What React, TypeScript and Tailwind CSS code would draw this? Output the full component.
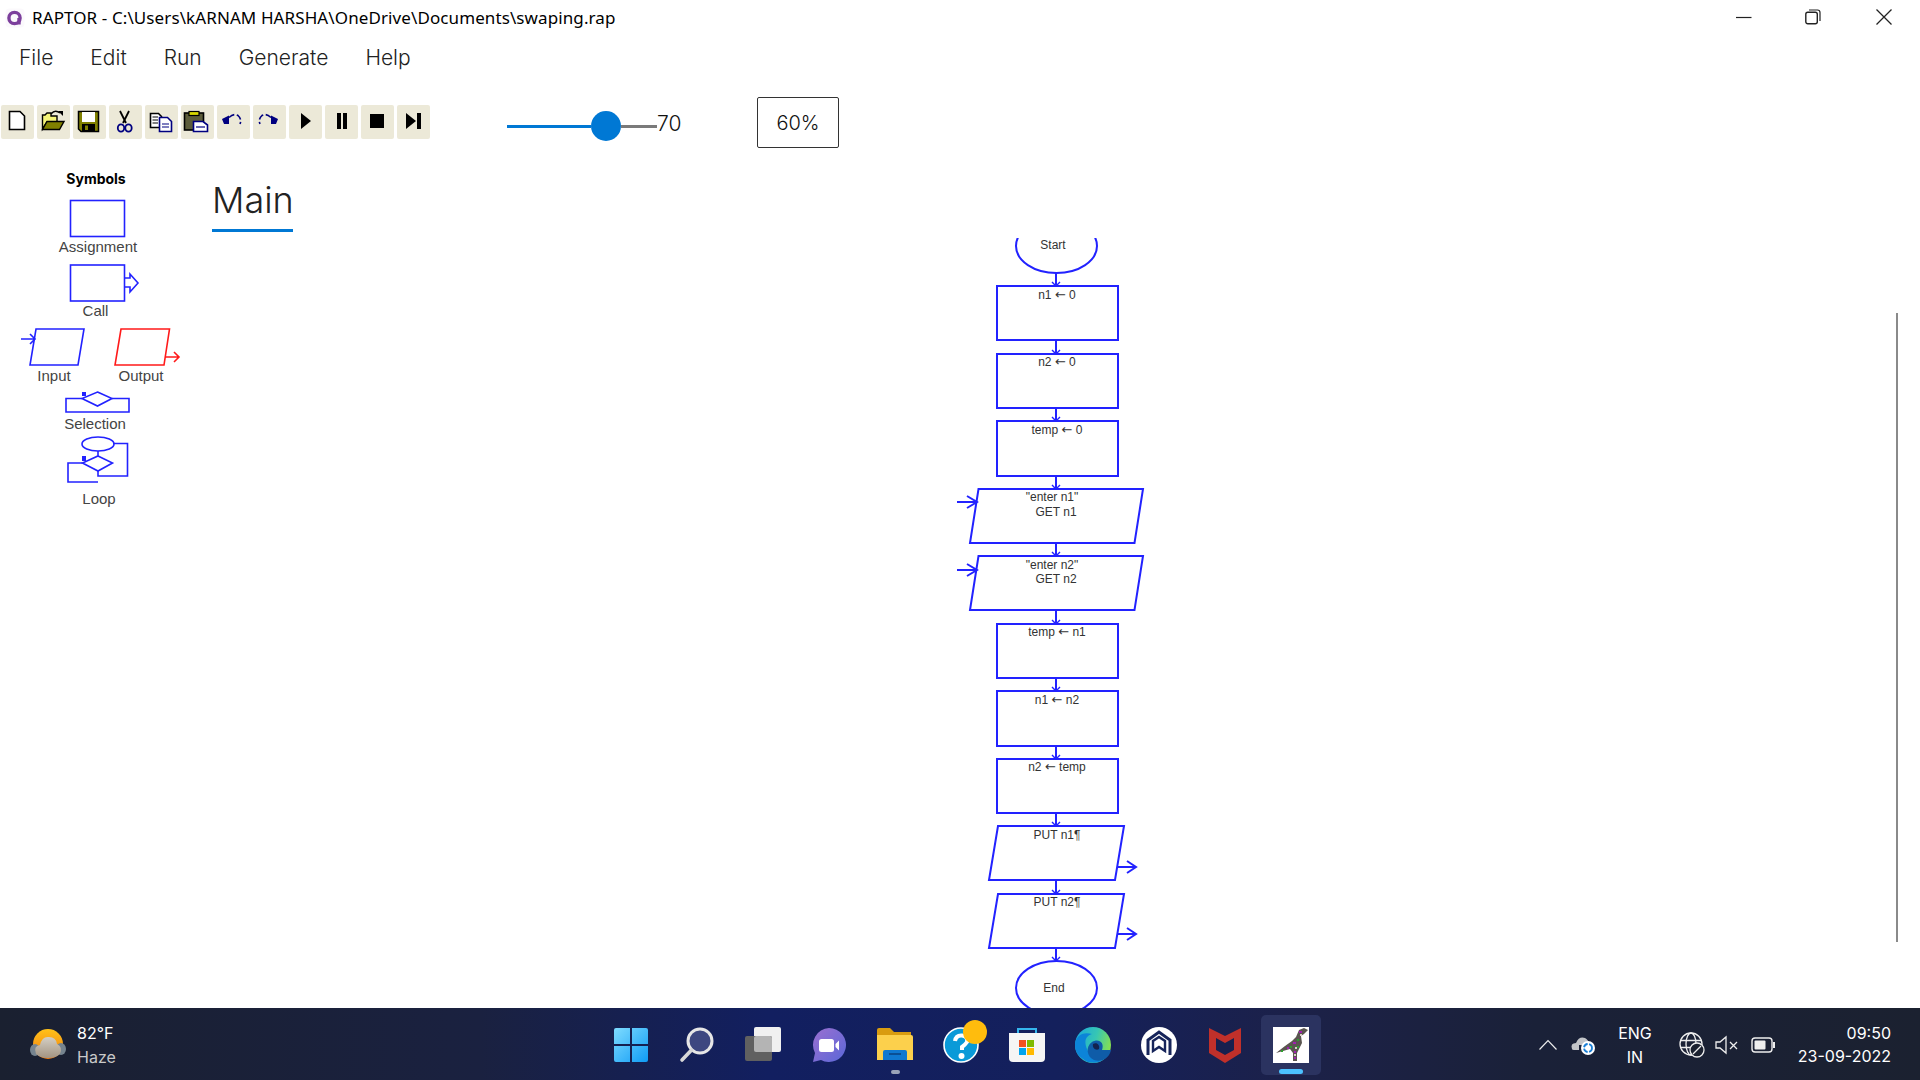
import React, { FC, ReactNode } from 'react';

const BLUE = '#2222ff';
const SEGOE = "font-['Noto_Sans',sans-serif]";
const INTER = "font-['Inter',sans-serif]";

const menuItems = ['File', 'Edit', 'Run', 'Generate', 'Help'];

const toolIcons: ReactNode[] = [
  <path key="new" d="M8.5 6.5H19L23.5 11V24.5H8.5Z" fill="#fff" stroke="#000" strokeWidth="1.6" />,
  <g key="open">
    <path d="M5.5 24V10H8L10 8H14V11H20V17H10L5.5 24Z" fill="#f4f47a" stroke="#000" strokeWidth="1.4" />
    <path d="M5.5 24.5L10 16.5H27L22.5 24.5Z" fill="#808000" stroke="#000" strokeWidth="1.4" />
    <path d="M14 9Q18 4 23 8" fill="none" stroke="#000" strokeWidth="1.4" />
    <path d="M21 6H26V11Z" fill="#000" />
  </g>,
  <g key="save">
    <path d="M5.5 6.5H25.5V26.5H8L5.5 24Z" fill="#808000" stroke="#000" strokeWidth="1.5" />
    <rect x="9" y="7" width="13" height="10" fill="#fff" />
    <rect x="9" y="19" width="13" height="7" fill="#000" />
    <rect x="12" y="20.5" width="3" height="4.5" fill="#808000" />
  </g>,
  <g key="cut">
    <path d="M11 6L17 18M20 6L14 18" stroke="#000" strokeWidth="1.8" fill="none" />
    <ellipse cx="12" cy="23" rx="3.2" ry="3.6" fill="none" stroke="#000080" strokeWidth="1.8" />
    <ellipse cx="19.5" cy="23" rx="3.2" ry="3.6" fill="none" stroke="#000080" strokeWidth="1.8" />
  </g>,
  <g key="copy">
    <path d="M5.5 8.5H13.5L16.5 11.5V22.5H5.5Z" fill="#fff" stroke="#000" strokeWidth="1.6" />
    <path d="M7.5 12H13M7.5 15H13M7.5 18H13" stroke="#000" strokeWidth="1.2" />
    <path d="M14.5 12.5H22.5L26.5 16.5V26.5H14.5Z" fill="#fff" stroke="#000080" strokeWidth="1.6" />
    <path d="M17 19H24M17 22H24" stroke="#000080" strokeWidth="1.2" />
  </g>,
  <g key="paste">
    <rect x="3.5" y="8" width="19" height="17" fill="#5c5c3a" stroke="#000" strokeWidth="1.6" />
    <rect x="8" y="6.5" width="10" height="4" fill="#d8d800" stroke="#000" strokeWidth="1.2" />
    <path d="M12.5 16.5H22L26.5 20V26.5H12.5Z" fill="#fff" stroke="#000080" strokeWidth="1.6" />
    <path d="M15 22H24" stroke="#000080" strokeWidth="1.2" />
  </g>,
  <g key="undo">
    <path d="M5 14L12 10.5V19H7Z" fill="#000080" />
    <path d="M12 12.5Q17 8 21 10.5Q25 14 23 19" fill="none" stroke="#000080" strokeWidth="1.6" strokeDasharray="6 2.5" />
  </g>,
  <g key="redo">
    <path d="M25 14L18 10.5V19H23Z" fill="#000080" />
    <path d="M18 12.5Q13 8 9 10.5Q5 14 7 19" fill="none" stroke="#000080" strokeWidth="1.6" strokeDasharray="6 2.5" />
  </g>,
  <path key="run" d="M12 8L22 16L12 24Z" fill="#000" />,
  <g key="pause">
    <rect x="12" y="8" width="4" height="16" fill="#000" />
    <rect x="18" y="8" width="4" height="16" fill="#000" />
  </g>,
  <rect key="stop" x="9" y="9" width="14" height="14" fill="#000" />,
  <g key="step">
    <path d="M9 8L19 16L9 24Z" fill="#000" />
    <rect x="20" y="8" width="4" height="16" fill="#000" />
  </g>,
];

const boxes = [
  { y: 286, y2: 340 },
  { y: 354, y2: 408 },
  { y: 421, y2: 476 },
  { y: 624, y2: 678 },
  { y: 691, y2: 746 },
  { y: 759, y2: 813 },
];

const links = [
  [273, 286],
  [340, 354],
  [408, 421],
  [476, 489],
  [543, 556],
  [610, 624],
  [678, 691],
  [746, 759],
  [813, 826],
  [880, 894],
  [948, 961],
];

const labels: { text: string; x: number; y: number }[] = [
  { text: 'Start', x: 1053, y: 249 },
  { text: 'n1 ← 0', x: 1057, y: 299 },
  { text: 'n2 ← 0', x: 1057, y: 366 },
  { text: 'temp ← 0', x: 1057, y: 434 },
  { text: '"enter n1"', x: 1052, y: 501 },
  { text: 'GET n1', x: 1056, y: 516 },
  { text: '"enter n2"', x: 1052, y: 569 },
  { text: 'GET n2', x: 1056, y: 583 },
  { text: 'temp ← n1', x: 1057, y: 636 },
  { text: 'n1 ← n2', x: 1057, y: 704 },
  { text: 'n2 ← temp', x: 1057, y: 771 },
  { text: 'PUT n1¶', x: 1057, y: 839 },
  { text: 'PUT n2¶', x: 1057, y: 906 },
  { text: 'End', x: 1054, y: 992 },
];

// the arrow glyph is far too small in Liberation, take it from DejaVu
const NodeText: FC<{ text: string }> = ({ text }) => {
  const parts = text.split('←');
  if (parts.length === 1) return <>{text}</>;
  return (
    <>
      {parts[0]}
      <tspan className="font-['DejaVu_Sans',sans-serif] text-[13px]">←</tspan>
      {parts[1]}
    </>
  );
};

const Flowchart: FC = () => (
  <svg width="1730" height="770" viewBox="190 238 1730 770" className="block">
    <g fill="none" stroke={BLUE} strokeWidth="2">
      <ellipse cx="1056.5" cy="246" rx="40.5" ry="27" />
      <ellipse cx="1056.5" cy="988" rx="40.5" ry="27" />
      {boxes.map((b) => (
        <rect key={b.y} x="997" y={b.y} width="121" height={b.y2 - b.y} />
      ))}
      <path d="M978.5 489H1143L1134.5 543H970Z" />
      <path d="M978.5 556H1143L1134.5 610H970Z" />
      <path d="M998 826H1124L1115 880H989Z" />
      <path d="M998 894H1124L1115 948H989Z" />
      {links.map(([a, b]) => (
        <g key={a}>
          <path d={`M1056 ${a}V${b}`} />
          <path d={`M1052 ${b - 4}L1056 ${b}L1060 ${b - 4}`} strokeWidth="1.4" />
        </g>
      ))}
      <path d="M957 502H977M967 496L977 502L967 508" />
      <path d="M957 570H977M967 564L977 570L967 576" />
      <path d="M1117 867H1136M1127 861L1136 867L1127 873" />
      <path d="M1117 934H1136M1127 928L1136 934L1127 940" />
    </g>
    {labels.map((l) => (
      <text
        key={l.text}
        x={l.x}
        y={l.y}
        textAnchor="middle"
        className="fill-[#333] font-['Liberation_Sans',sans-serif] text-[12px]"
      >
        <NodeText text={l.text} />
      </text>
    ))}
  </svg>
);

const Shape: FC<{ top: number; height: number; children: ReactNode }> = ({ top, height, children }) => (
  <svg width="190" height={height} viewBox={`0 ${top} 190 ${height}`} className="block shrink-0">
    <g fill="none" stroke={BLUE} strokeWidth="1.6">
      {children}
    </g>
  </svg>
);

const SymbolLabel: FC<{ className: string; children: ReactNode }> = ({ className, children }) => (
  <div className={`h-[18px] shrink-0 text-center text-[15px] leading-[18px] text-[#444] ${className}`}>
    {children}
  </div>
);

const SymbolPanel: FC = () => (
  <aside className="flex w-[190px] shrink-0 flex-col pt-[22px] font-['Liberation_Sans',sans-serif]">
    <div className={`h-[18px] w-[192px] text-center text-[14px] leading-[18px] font-bold text-black ${INTER}`}>
      Symbols
    </div>
    <div className="h-[10px]" />
    <Shape top={198} height={40}>
      <rect x="70.5" y="200.5" width="54" height="36" />
    </Shape>
    <SymbolLabel className="w-[196px]">Assignment</SymbolLabel>
    <Shape top={256} height={46}>
      <rect x="70.5" y="265" width="54" height="36" />
      <path d="M125 278H130V274L138 283L130 292V287H125" />
    </Shape>
    <SymbolLabel className="w-[191px]">Call</SymbolLabel>
    <Shape top={320} height={47}>
      <path d="M36 329H84L78 365H30Z" />
      <path d="M21 339H35M30 334L35 339L30 344" />
      <g stroke="#ff1a1a">
        <path d="M121 329H169.5L164 365H115Z" />
        <path d="M165 357H179M174 352L179 357L174 362" />
      </g>
    </Shape>
    <div className="flex h-[18px] shrink-0">
      <SymbolLabel className="w-[108px]">Input</SymbolLabel>
      <SymbolLabel className="w-[66px]">Output</SymbolLabel>
    </div>
    <Shape top={385} height={30}>
      <path d="M82 398.5H66V412H129V398.5H112" />
      <path d="M97.5 392L112 398.5L97.5 406L82 398.5Z" />
      <rect x="82" y="392" width="4" height="4" fill={BLUE} stroke="none" />
    </Shape>
    <SymbolLabel className="w-[190px]">Selection</SymbolLabel>
    <Shape top={433} height={57}>
      <ellipse cx="98" cy="444" rx="16" ry="7" />
      <path d="M98 451V456M98 456L112.5 463L98 471L82.5 463Z" />
      <path d="M113 443.5H127.5V476H98V471" />
      <path d="M82.5 463H68V482H98" />
      <rect x="82" y="456" width="4" height="5" fill={BLUE} stroke="none" />
    </Shape>
    <SymbolLabel className="w-[198px]">Loop</SymbolLabel>
  </aside>
);

const TitleBar: FC = () => (
  <div className="flex h-[36px] items-center">
    <svg width="20" height="20" viewBox="0 0 20 20" className="ml-[5px] shrink-0">
      <rect x="0.5" y="0.5" width="19" height="19" rx="4" fill="#fbf9fc" />
      <circle cx="9.5" cy="10" r="5.6" fill="none" stroke="#7c3f9c" strokeWidth="3.4" />
      <path d="M14 10V16.5" stroke="#7c3f9c" strokeWidth="3.4" />
    </svg>
    <span className={`ml-[7px] text-[17px] tracking-[0.1px] whitespace-nowrap text-black ${SEGOE}`}>
      {'RAPTOR - C:\\Users\\kARNAM HARSHA\\OneDrive\\Documents\\swaping.rap'}
    </span>
    <div className="-mt-[3px] ml-auto flex items-center pr-[28px]">
      <svg width="16" height="16" viewBox="0 0 16 16" className="mr-[53px]">
        <path d="M0 8.5H15.5" stroke="#222" strokeWidth="1.2" />
      </svg>
      <svg width="16" height="16" viewBox="0 0 16 16" className="mr-[55px]">
        <rect x="0.8" y="3.3" width="11.5" height="11.5" rx="2" fill="none" stroke="#222" strokeWidth="1.4" />
        <path d="M4 1H12.5Q15 1 15 3.5V12" fill="none" stroke="#222" strokeWidth="1.2" />
      </svg>
      <svg width="16" height="16" viewBox="0 0 16 16">
        <path d="M0.5 0.5L15.5 15.5M15.5 0.5L0.5 15.5" stroke="#222" strokeWidth="1.3" />
      </svg>
    </div>
  </div>
);

const Toolbar: FC = () => (
  <div className="mt-[17px] flex h-[51px] shrink-0 items-start">
    <div className="mt-[8px] ml-[1px] flex gap-[3px]">
      {toolIcons.map((icon, i) => (
        <div key={i} className="h-[34px] w-[33px] rounded-[2px] bg-[#ece9d8]">
          <svg width="33" height="34" viewBox="0 0 33 34">
            {icon}
          </svg>
        </div>
      ))}
    </div>
    <div className="mt-[14px] ml-[77px] flex h-[30px] items-center">
      <div className="h-[3px] w-[84px] bg-[#0078d4]" />
      <div className="h-[30px] w-[30px] rounded-full bg-[#0078d4]" />
      <div className="h-[3px] w-[36px] bg-[#7a7a7a]" />
    </div>
    <span className={`mt-[12px] w-[24px] text-[21px] leading-[30px] font-light text-[#111] ${INTER}`}>70</span>
    <div
      className={`ml-[76px] flex h-[51px] w-[82px] items-center justify-center rounded-[2px] border border-[#333] text-[20px] font-light text-[#111] ${INTER}`}
    >
      60%
    </div>
  </div>
);

const WeatherIcon: FC = () => (
  <svg width="36" height="32" viewBox="0 0 36 32">
    <defs>
      <linearGradient id="sun" x1="0" y1="0" x2="0" y2="1">
        <stop offset="0" stopColor="#ffc21a" />
        <stop offset="1" stopColor="#f07a10" />
      </linearGradient>
      <linearGradient id="cloud" x1="0" y1="0" x2="0" y2="1">
        <stop offset="0" stopColor="#d4cfc4" />
        <stop offset="1" stopColor="#a39482" />
      </linearGradient>
    </defs>
    <circle cx="18" cy="15" r="15" fill="url(#sun)" />
    <ellipse cx="5" cy="21" rx="5" ry="6" fill="#76848f" />
    <ellipse cx="31" cy="20" rx="5" ry="6" fill="#76848f" />
    <path d="M6 25Q3 17 10 16Q12 7 19 8Q26 8 27 15Q33 18 30 25Q26 29 18 29Q10 29 6 25Z" fill="url(#cloud)" />
  </svg>
);

const taskIcons: { key: string; node: ReactNode; dot?: boolean; active?: boolean }[] = [
  {
    key: 'start',
    node: (
      <svg width="36" height="36" viewBox="0 0 36 36">
        <defs>
          <linearGradient id="win" x1="0" y1="0" x2="1" y2="1">
            <stop offset="0" stopColor="#7fdcff" />
            <stop offset="1" stopColor="#0f9bf5" />
          </linearGradient>
        </defs>
        <path d="M1 3Q1 1 3 1H17V17H1ZM19 1H33Q35 1 35 3V17H19ZM1 19H17V35H3Q1 35 1 33ZM19 19H35V33Q35 35 33 35H19Z" fill="url(#win)" />
      </svg>
    ),
  },
  {
    key: 'search',
    node: (
      <svg width="36" height="36" viewBox="0 0 36 36">
        <circle cx="21" cy="14" r="12" fill="#3d4780" stroke="#e6e6e6" strokeWidth="3" />
        <path d="M12.5 23L3 33" stroke="#d8d8d8" strokeWidth="3.6" strokeLinecap="round" />
      </svg>
    ),
  },
  {
    key: 'view',
    node: (
      <svg width="36" height="36" viewBox="0 0 36 36">
        <rect x="9" y="0" width="27" height="25" rx="2" fill="#f0f0f0" />
        <rect x="0" y="9" width="27" height="25" rx="2" fill="#606060" />
        <path d="M9 11Q9 9 11 9H25Q27 9 27 11V25H11Q9 25 9 23Z" fill="#b4b4b4" />
      </svg>
    ),
  },
  {
    key: 'chat',
    node: (
      <svg width="36" height="36" viewBox="0 0 36 36">
        <defs>
          <linearGradient id="chat" x1="0" y1="0" x2="1" y2="1">
            <stop offset="0" stopColor="#9a6fd0" />
            <stop offset="1" stopColor="#5b68d8" />
          </linearGradient>
        </defs>
        <path d="M18 1A17 17 0 1 1 10 33L2 35L4 26A17 17 0 0 1 18 1Z" fill="url(#chat)" />
        <rect x="8" y="12" width="15" height="13" rx="2.5" fill="#fff" />
        <path d="M24.5 17L28 13.5V23.5L24.5 20Z" fill="#fff" />
      </svg>
    ),
  },
  {
    key: 'files',
    dot: true,
    node: (
      <svg width="36" height="36" viewBox="0 0 36 36">
        <path d="M0 3Q0 1 2 1H13L17 5H34V12H0Z" fill="#d99c10" />
        <path d="M0 8H34Q36 8 36 10V33H0Z" fill="#fcd04c" />
        <path d="M6 33V25Q6 23 8 23H28Q30 23 30 25V33Z" fill="#0f78d0" />
        <path d="M12 27H24" stroke="#0a4f94" strokeWidth="2" />
      </svg>
    ),
  },
  {
    key: 'help',
    node: (
      <div className="relative h-[36px] w-[36px]">
        <svg width="36" height="36" viewBox="0 0 36 36">
          <circle cx="18" cy="18" r="17" fill="#0a9ad8" stroke="#fff" strokeWidth="1.6" />
          <path d="M12 14Q13 8 19 8.5Q25 9.5 24 15Q22 18 19 20V23" fill="none" stroke="#fff" strokeWidth="4" />
          <circle cx="18.5" cy="29" r="3" fill="#fff" />
        </svg>
        <div className="absolute top-[-7px] left-[20px] h-[24px] w-[24px] rounded-full bg-[#ffbc0d]" />
      </div>
    ),
  },
  {
    key: 'store',
    node: (
      <svg width="36" height="36" viewBox="0 0 36 36">
        <path d="M9 7V2H27V7" fill="none" stroke="#35b6ee" strokeWidth="2" />
        <path d="M0 6H36V31Q36 35 32 35H4Q0 35 0 31Z" fill="#f5f5f5" />
        <rect x="10" y="13" width="7" height="7" fill="#f25022" />
        <rect x="18" y="13" width="7" height="7" fill="#7fba00" />
        <rect x="10" y="21" width="7" height="7" fill="#00a4ef" />
        <rect x="18" y="21" width="7" height="7" fill="#ffb900" />
      </svg>
    ),
  },
  {
    key: 'edge',
    node: (
      <svg width="36" height="36" viewBox="0 0 36 36">
        <defs>
          <linearGradient id="edgeA" x1="0" y1="0.2" x2="1" y2="0.5">
            <stop offset="0" stopColor="#1aa8dc" />
            <stop offset="0.55" stopColor="#36c6b4" />
            <stop offset="1" stopColor="#86e050" />
          </linearGradient>
        </defs>
        <circle cx="18" cy="18" r="18" fill="url(#edgeA)" />
        <path d="M0 18C0 9 8 4 17 7C10 9 9 15 12 22C15 30 24 35 32 29C26 37 15 38 8 32C3 29 0 24 0 18Z" fill="#0c84d8" />
        <path d="M17 15C23 11 30 15 27 23H36C35 30 27 36 19 33C12 30 10 20 17 15Z" fill="#0f5ca8" />
        <path d="M18 17C22 15 25 18 24 22C21 24 17 21 18 17Z" fill="#14234f" />
      </svg>
    ),
  },
  {
    key: 'raptor',
    node: (
      <svg width="36" height="36" viewBox="0 0 36 36">
        <circle cx="18" cy="18" r="18" fill="#fff" />
        <path d="M7 28V13L18 5L29 13V28" fill="none" stroke="#16245a" strokeWidth="3" />
        <path d="M12 24V14L18 10L24 14V24L18 20Z" fill="#fff" stroke="#16245a" strokeWidth="2.4" />
      </svg>
    ),
  },
  {
    key: 'mcafee',
    node: (
      <svg width="36" height="36" viewBox="0 0 36 36">
        <path d="M2 1L18 9L34 1V26L18 36L2 26Z" fill="#c0302a" />
        <path d="M9 11L18 16L27 11V23L18 28L9 23Z" fill="#16204e" />
      </svg>
    ),
  },
  {
    key: 'dino',
    active: true,
    node: (
      <svg width="36" height="36" viewBox="0 0 36 36">
        <rect width="36" height="36" fill="#fff" />
        <path d="M3 26L12 19L19 14L23 10L26 3L31 1L35 3L31 7L28 9L29 16L26 22L24 26L24 34L20 34L20 26L17 22L10 24Z" fill="#5a5550" />
        <path d="M26 4H29V6H26ZM20 15H23V17H20ZM14 20H16V22H14ZM21 24H23V26H21ZM21 30H23V32H21Z" fill="#a020b0" />
        <path d="M24 12H26V14H24ZM17 19H19V21H17ZM24 19H26V21H24ZM8 23H10V25H8Z" fill="#2e9e2e" />
        <path d="M27 7H29V9H27ZM22 20H24V22H22ZM21 27H23V29H21Z" fill="#d8d0c8" />
      </svg>
    ),
  },
];

const Taskbar: FC = () => (
  <footer className="flex h-[72px] shrink-0 items-center bg-[linear-gradient(90deg,#1a2030_0%,#1a2140_25%,#121f60_40%,#14205c_55%,#1c2148_68%,#1a2138_80%,#1b2130_100%)] pt-[2px]">
    <div className={`flex w-[613px] shrink-0 items-center pl-[30px] ${INTER}`}>
      <WeatherIcon />
      <div className="ml-[11px] flex flex-col text-[16px] leading-[24px]">
        <span className="text-white">82°F</span>
        <span className="text-[#c9c9c9]">Haze</span>
      </div>
    </div>
    <div className="flex shrink-0 items-center gap-[30px]">
      {taskIcons.map((t) => (
        <div key={t.key} className="relative h-[36px] w-[36px]">
          {t.active && (
            <div className="absolute top-[-12px] left-[-12px] h-[60px] w-[60px] rounded-[5px] bg-[#2b3360]" />
          )}
          <div className="relative">{t.node}</div>
          {t.dot && <div className="absolute top-[43px] left-[14px] h-[4px] w-[9px] rounded-full bg-[#9aa3b8]" />}
          {t.active && <div className="absolute top-[42px] left-[6px] h-[5px] w-[24px] rounded-full bg-[#4cc2ff]" />}
        </div>
      ))}
    </div>
    <div className={`flex flex-1 items-center text-white ${INTER}`}>
      <svg width="18" height="12" viewBox="0 0 18 12" className="ml-[230px] shrink-0">
        <path d="M0.5 10.5L9 1.5L17.5 10.5" fill="none" stroke="#eee" strokeWidth="1.2" />
      </svg>
      <svg width="26" height="20" viewBox="0 0 26 20" className="ml-[13px] shrink-0">
        <path d="M2 14Q0 8 6 8Q9 1 15 3Q19 5 19 10H9V15H4Q2 15 2 14Z" fill="#c2c4c8" />
        <circle cx="18" cy="13" r="7" fill="#fff" />
        <circle cx="18" cy="13" r="4" fill="none" stroke="#1a7fd6" strokeWidth="1.8" strokeDasharray="5 1.5" />
      </svg>
      <div className="ml-[19px] flex w-[40px] shrink-0 flex-col items-center text-[16px] leading-[24px]">
        <span>ENG</span>
        <span>IN</span>
      </div>
      <svg width="26" height="26" viewBox="0 0 26 26" className="ml-[24px] shrink-0">
        <g fill="none" stroke="#eee" strokeWidth="1.3">
          <circle cx="12" cy="12" r="11" />
          <ellipse cx="12" cy="12" rx="5" ry="11" />
          <path d="M1.5 8.5H22.5M1.5 15.5H13" />
        </g>
        <circle cx="18" cy="18" r="7" fill="#1b2130" stroke="#eee" strokeWidth="1.3" />
        <path d="M14 22L22 14" stroke="#eee" strokeWidth="1.3" />
      </svg>
      <svg width="24" height="20" viewBox="0 0 24 20" className="ml-[10px] shrink-0">
        <path d="M1 7H5L11 2V18L5 13H1Z" fill="none" stroke="#eee" strokeWidth="1.3" />
        <path d="M15 7L22 14M22 7L15 14" stroke="#eee" strokeWidth="1.3" />
      </svg>
      <svg width="26" height="16" viewBox="0 0 26 16" className="ml-[12px] shrink-0">
        <rect x="1" y="1" width="20" height="14" rx="3" fill="none" stroke="#eee" strokeWidth="1.4" />
        <rect x="3.5" y="3.5" width="11" height="9" rx="1" fill="#eee" />
        <path d="M23 5V11" stroke="#eee" strokeWidth="2" />
      </svg>
      <div className="ml-auto flex flex-col items-end pr-[29px] text-[16px] leading-[23px]">
        <span>09:50</span>
        <span>23-09-2022</span>
      </div>
    </div>
  </footer>
);

const App: FC = () => (
  <div className="flex h-[1080px] w-[1920px] flex-col overflow-hidden bg-white">
    <TitleBar />
    <nav className={`flex h-[44px] shrink-0 items-center gap-[37px] pl-[19px] text-[21px] font-light text-[#222] ${INTER}`}>
      {menuItems.map((item) => (
        <span key={item}>{item}</span>
      ))}
    </nav>
    <Toolbar />
    <div className="relative flex min-h-0 flex-1">
      <SymbolPanel />
      <main className="flex flex-1 flex-col">
        <div
          className={`mt-[28px] ml-[22px] h-[56px] w-[81px] border-b-[3px] border-[#0078d4] text-[36px] leading-[48px] font-light text-[#222] ${INTER}`}
        >
          Main
        </div>
        <div className="mt-[6px] h-[770px]">
          <Flowchart />
        </div>
      </main>
      <div className="absolute top-[165px] right-[22px] h-[629px] w-[2px] bg-[#8a8a8a]" />
    </div>
    <Taskbar />
  </div>
);

export default App;
